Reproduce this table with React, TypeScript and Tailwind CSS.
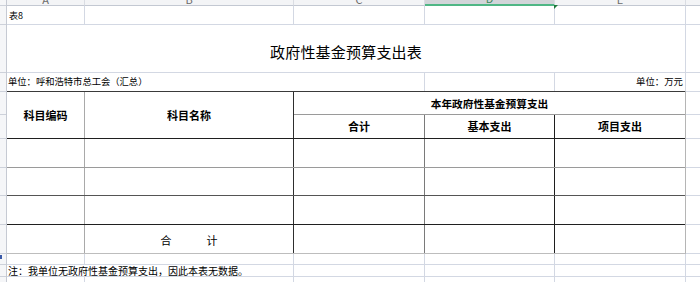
import React from "react";

const FONT = { fontFamily: '"Noto Sans CJK SC", "Noto Sans", sans-serif' };

function ColHead({ w, letter, sel, last }: { w: string; letter?: string; sel?: boolean; last?: boolean }) {
  return (
    <div
      className={`${w} h-[6px] flex items-end justify-center overflow-hidden ${
        sel ? "bg-[#d2d5d9] border-b-2 border-[#4fb685]" : "bg-[#f3f4f6] border-b border-[#c3c8d2]"
      } ${last ? "" : "border-r border-r-[#dadde3]"}`}
    >
      {letter && (
        <span className={`text-[11px] leading-[11px] mb-[0px] ${sel ? "text-[#3f8a5f]" : "text-[#6b6b6b]"}`}>{letter}</span>
      )}
    </div>
  );
}

function GridRow({ h, children }: { h: string; children?: React.ReactNode }) {
  return <div className={`flex ${h} border-b border-[#d3d8e3]`}>{children}</div>;
}

function GCell({ w, children, className = "", noR }: { w: string; children?: React.ReactNode; className?: string; noR?: boolean }) {
  return (
    <div className={`${w} h-full flex items-center ${noR ? "" : "border-r border-[#d3d8e3]"} ${className}`}>{children}</div>
  );
}

export default function App() {
  const rh = "bg-[#f5f6f8] border-b border-[#cdd1da]";
  return (
    <div className="relative w-[700px] h-[282px] overflow-hidden bg-white text-black" style={FONT}>
      <div className="flex">
        {/* row header strip */}
        <div className="w-[7px] flex flex-col border-r border-[#c6cad3] bg-[#f5f6f8]">
          <div className={`h-[6px] ${rh} bg-[#eceef1]`} />
          <div className={`h-[19px] ${rh}`} />
          <div className={`h-[48px] ${rh}`} />
          <div className={`h-[19px] ${rh}`} />
          <div className={`h-[23px] ${rh}`} />
          <div className={`h-[24px] ${rh}`} />
          <div className={`h-[29px] ${rh}`} />
          <div className={`h-[28px] ${rh}`} />
          <div className={`h-[29px] ${rh}`} />
          <div className={`h-[29px] ${rh}`} />
          <div className={`h-[11px] ${rh} relative`}>
            <div className="absolute left-0 top-[1px] w-[2px] h-[4px] bg-[#3b5aa8]" />
          </div>
          <div className={`h-[12px] ${rh}`} />
          <div className="h-[10px]" />
        </div>

        {/* main */}
        <div className="w-[693px] flex flex-col">
          {/* column header */}
          <div className="flex">
            <ColHead w="w-[78px]" letter="A" />
            <ColHead w="w-[209px]" letter="B" />
            <ColHead w="w-[131px]" letter="C" />
            <ColHead w="w-[130px]" letter="D" sel />
            <ColHead w="w-[131px]" letter="E" />
            <ColHead w="w-[14px]" last />
          </div>

          {/* row 1 */}
          <GridRow h="h-[19px]">
            <GCell w="w-[78px]" className="pl-[2px]">
              <span className="text-[9px] leading-none">表8</span>
            </GCell>
            <GCell w="w-[209px]" />
            <GCell w="w-[131px]" />
            <GCell w="w-[130px]" />
            <GCell w="w-[131px]" />
            <GCell w="w-[14px]" noR />
          </GridRow>

          {/* title row */}
          <GridRow h="h-[48px]">
            <GCell w="w-[679px]" className="justify-center pt-[5px]">
              <span className="text-[15px] leading-none tracking-[0.2px]">政府性基金预算支出表</span>
            </GCell>
            <GCell w="w-[14px]" noR />
          </GridRow>

          {/* unit row */}
          <div className="flex h-[18px]">
            <GCell w="w-[418px]" className="pl-[1px]">
              <span className="text-[9.3px] leading-none whitespace-nowrap">单位：呼和浩特市总工会（汇总）</span>
            </GCell>
            <GCell w="w-[130px]" />
            <GCell w="w-[131px]" className="justify-end pr-[2px]">
              <span className="text-[9.4px] leading-none whitespace-nowrap">单位：万元</span>
            </GCell>
            <GCell w="w-[14px]" noR />
          </div>

          {/* table section */}
          <div className="flex">
            <div className="w-[679px] flex flex-col border-r border-[#b5b5b5] border-b border-b-[#bdbdbd]">
              {/* header */}
              <div className="flex h-[47px] border-t border-[#3a3a3a]">
                <div className="w-[77px] flex items-center justify-center">
                  <span className="text-[11px] font-bold leading-none">科目编码</span>
                </div>
                <div className="w-[209px] flex items-center justify-center border-l border-[#a9a9a9]">
                  <span className="text-[11px] font-bold leading-none">科目名称</span>
                </div>
                <div className="w-[392px] flex flex-col border-l border-[#2e2e2e]">
                  <div className="h-[22px] flex items-center justify-center pt-[2px]">
                    <span className="text-[10.7px] font-bold leading-none">本年政府性基金预算支出</span>
                  </div>
                  <div className="flex h-[24px] border-t border-[#9a9a9a]">
                    <div className="w-[130px] flex items-center justify-center">
                      <span className="text-[11px] font-bold leading-none">合计</span>
                    </div>
                    <div className="w-[130px] flex items-center justify-center border-l border-[#7a7a7a]">
                      <span className="text-[11px] font-bold leading-none">基本支出</span>
                    </div>
                    <div className="w-[131px] flex items-center justify-center border-l border-[#1e1e1e]">
                      <span className="text-[11px] font-bold leading-none">项目支出</span>
                    </div>
                  </div>
                </div>
              </div>
              {/* body rows */}
              {[
                { h: "h-[29px]", c: "border-[#1f1f1f]" },
                { h: "h-[28px]", c: "border-[#9a9a9a]" },
                { h: "h-[29px]", c: "border-[#555555]" },
                { h: "h-[29px]", c: "border-[#202020]" },
              ].map((r, i) => (
                <div key={i} className={`flex ${r.h} border-t ${r.c}`}>
                  <div className="w-[77px]" />
                  <div className="w-[209px] flex items-center justify-center border-l border-[#a9a9a9]">
                    {i === 3 && (
                      <span className="text-[11px] leading-none flex gap-[35px] pt-[2px]">
                        <span>合</span>
                        <span>计</span>
                      </span>
                    )}
                  </div>
                  <div className="w-[131px] border-l border-[#2e2e2e]" />
                  <div className="w-[130px] border-l border-[#7a7a7a]" />
                  <div className="w-[131px] border-l border-[#1e1e1e]" />
                </div>
              ))}
            </div>
            {/* filler */}
            <div className="w-[14px] flex flex-col">
              <div className="h-[24px] border-t border-b border-[#d3d8e3]" />
              <div className="h-[24px] border-b border-[#d3d8e3]" />
              <div className="h-[29px] border-b border-[#d3d8e3]" />
              <div className="h-[28px] border-b border-[#d3d8e3]" />
              <div className="h-[29px] border-b border-[#d3d8e3]" />
              <div className="h-[29px] border-b border-[#d3d8e3]" />
            </div>
          </div>

          {/* after table */}
          <GridRow h="h-[11px]">
            <GCell w="w-[78px]" />
            <GCell w="w-[209px]" />
            <GCell w="w-[131px]" />
            <GCell w="w-[130px]" />
            <GCell w="w-[131px]" />
            <GCell w="w-[14px]" noR />
          </GridRow>
          <GridRow h="h-[12px]">
            <GCell w="w-[287px]" className="pl-[1px]">
              <span className="text-[10px] leading-none whitespace-nowrap">注：我单位无政府性基金预算支出，因此本表无数据。</span>
            </GCell>
            <GCell w="w-[131px]" />
            <GCell w="w-[130px]" />
            <GCell w="w-[131px]" />
            <GCell w="w-[14px]" noR />
          </GridRow>
          <div className="flex h-[10px]">
            <GCell w="w-[78px]" />
            <GCell w="w-[209px]" />
            <GCell w="w-[131px]" />
            <GCell w="w-[130px]" />
            <GCell w="w-[131px]" />
            <GCell w="w-[14px]" noR />
          </div>
        </div>
      </div>
      {/* fill handle marker */}
      <div className="absolute left-[554px] top-[5px] w-0 h-0 border-t-[4px] border-t-[#1e7a3c] border-r-[4px] border-r-transparent" />
    </div>
  );
}
